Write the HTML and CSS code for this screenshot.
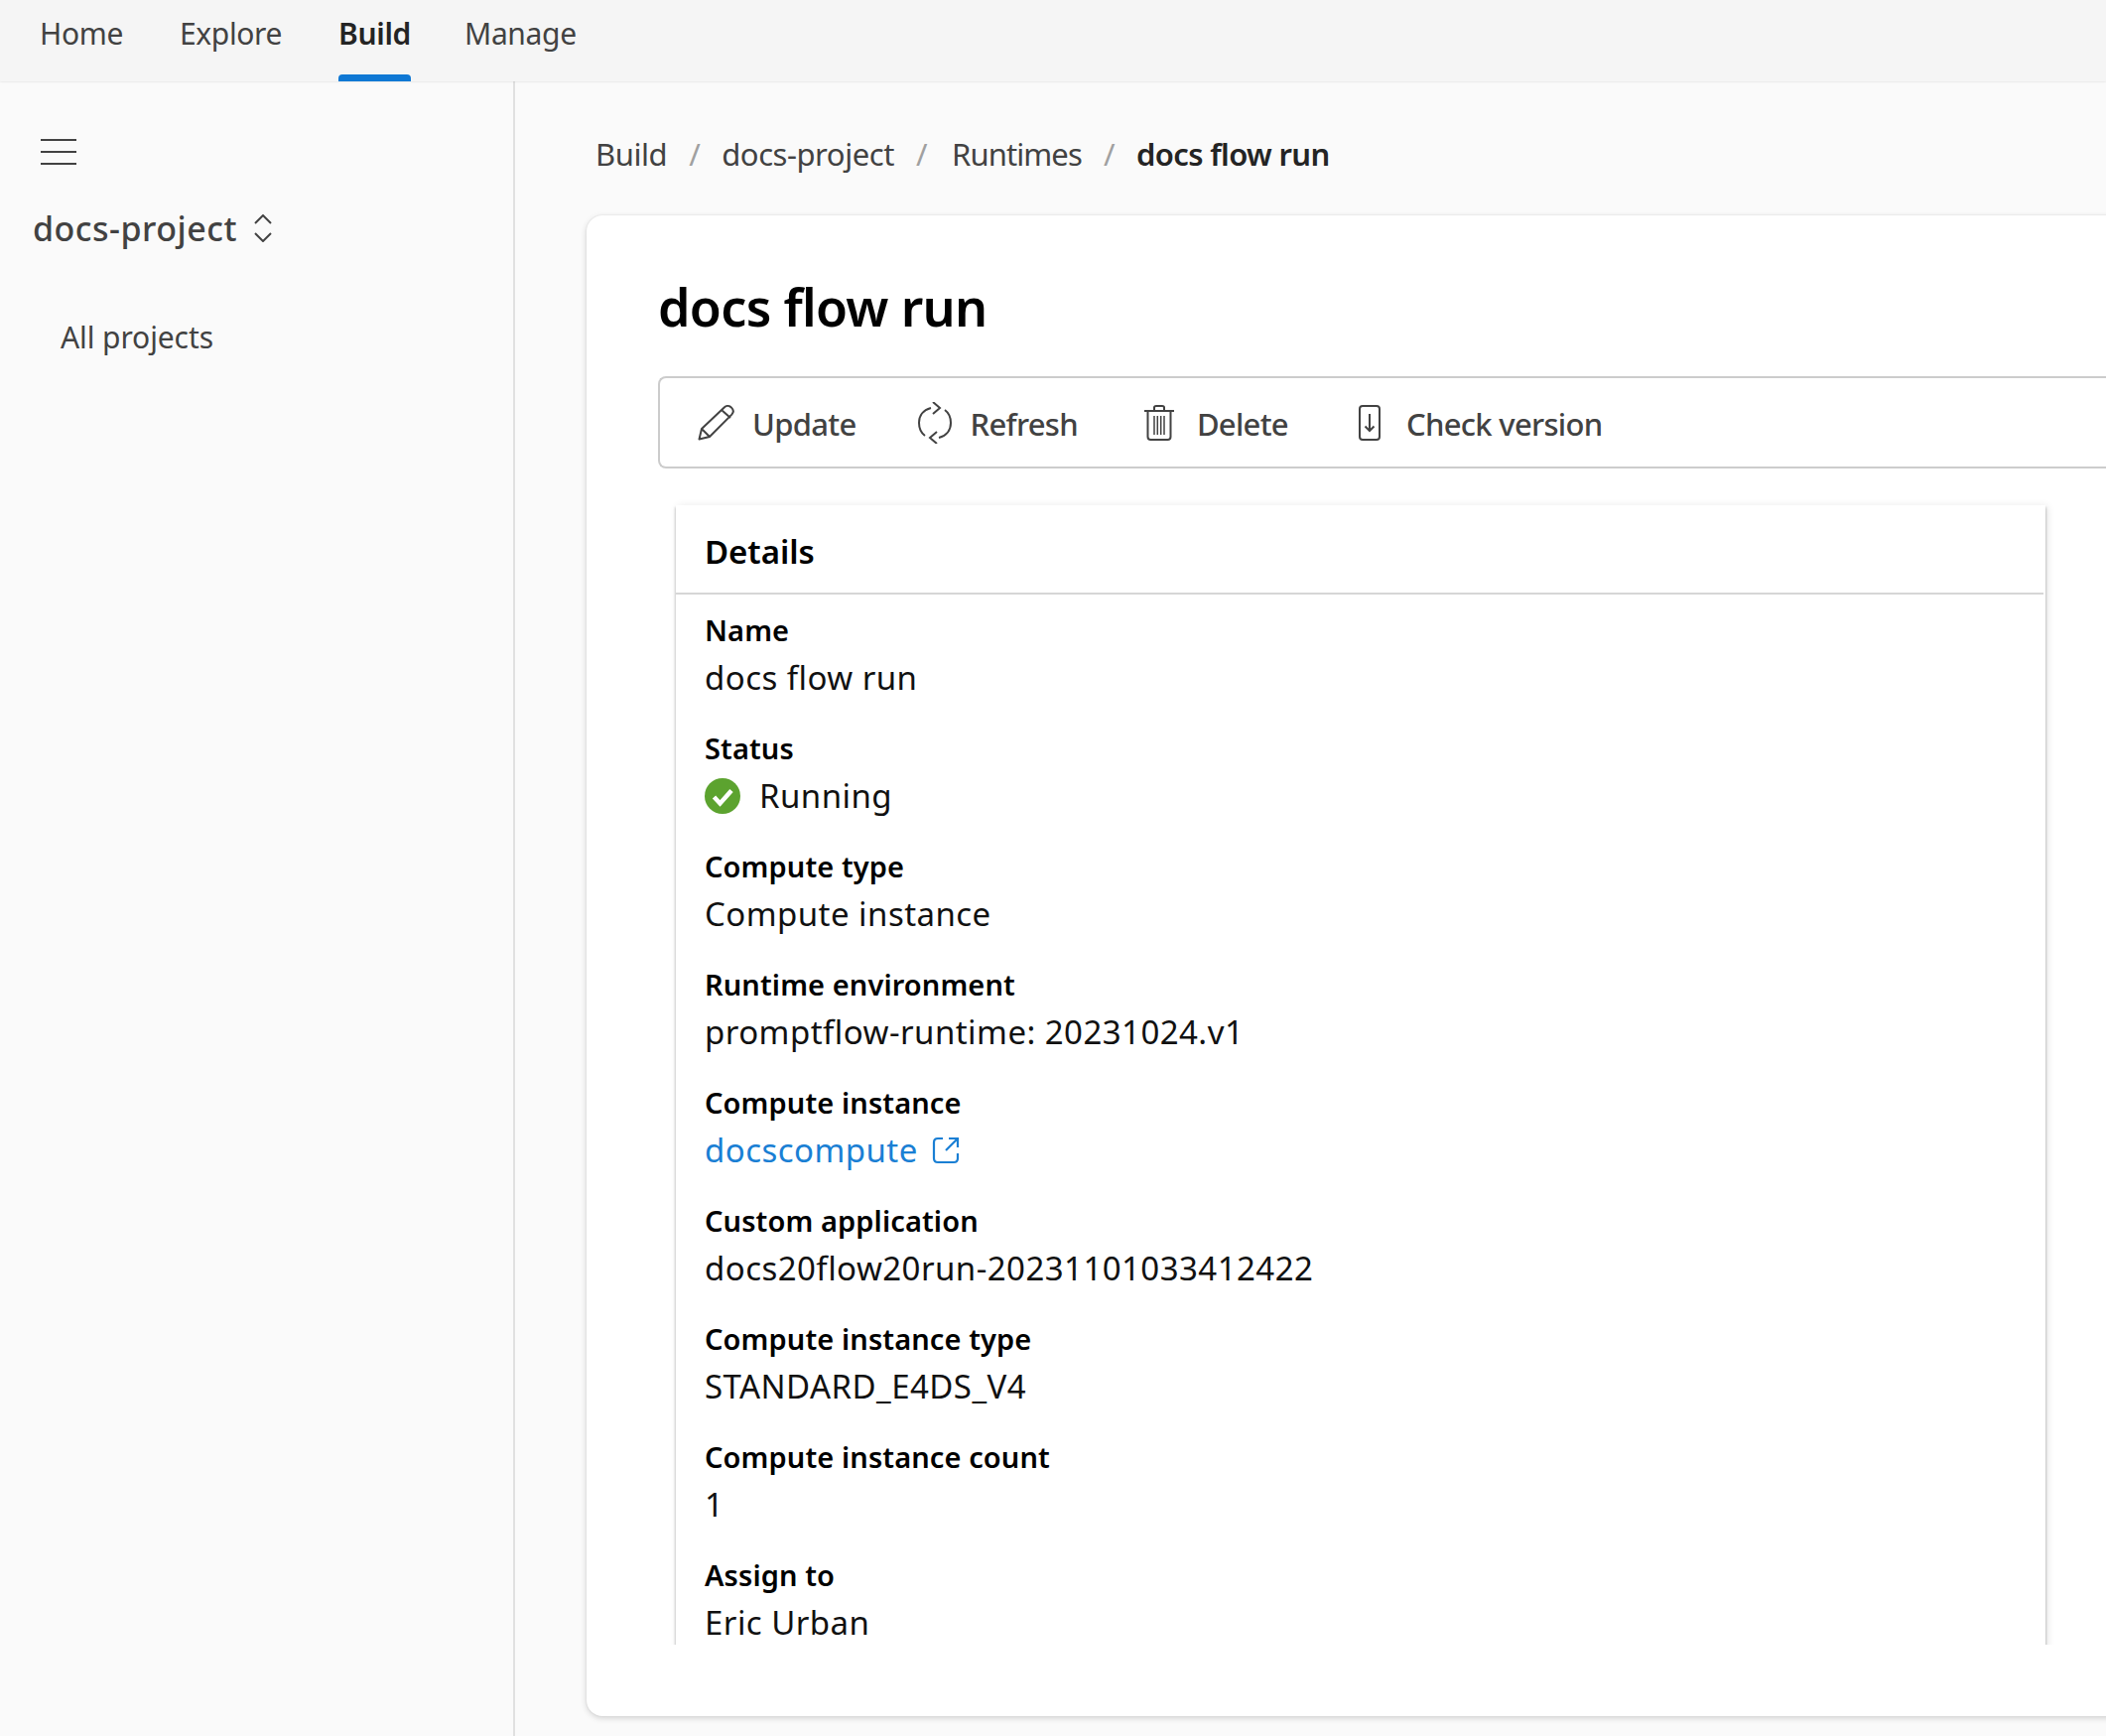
FILE: index.html
```html
<!DOCTYPE html>
<html lang="en">
<head>
<meta charset="utf-8">
<title>docs flow run</title>
<link rel="stylesheet" href="styles.css">
</head>
<body>
<header class="topbar">
  <nav class="tabs">
    <a class="tab tab-home">Home</a>
    <a class="tab tab-explore">Explore</a>
    <a class="tab tab-build">Build</a>
    <a class="tab tab-manage">Manage</a>
  </nav>
</header>
<div class="main">
  <aside class="sidebar">
    <svg class="hamburger" width="36" height="26" viewBox="0 0 36 26"><path d="M0 1h36M0 13h36M0 25h36" stroke="#424242" stroke-width="2" fill="none"/></svg>
    <div class="project">
      <span class="project-name">docs-project</span>
      <svg class="updown" width="20" height="28" viewBox="0 0 20 28"><path d="M2 9 10 1l8 8M2 19l8 8 8-8" stroke="#424242" stroke-width="2" fill="none"/></svg>
    </div>
    <a class="all-projects">All projects</a>
  </aside>
  <section class="content">
    <nav class="crumbs">
      <a class="crumb c1">Build</a><span class="sep s1">/</span>
      <a class="crumb c2">docs-project</a><span class="sep s2">/</span>
      <a class="crumb c3">Runtimes</a><span class="sep s3">/</span>
      <span class="crumb current">docs flow run</span>
    </nav>
    <div class="card">
      <h1 class="title">docs flow run</h1>
      <div class="toolbar">
        <button class="tool t-update">
          <svg width="38" height="36" viewBox="0 0 38 36"><path d="M1.5 34.5 4 24 27 2.2c2-1.800 5-1.600 7 .4 2.200 2.200 2.200 5 .3 7L12 32 1.500 34.500ZM4 24l8 8M24 5l9 8" stroke="#424242" stroke-width="2" fill="none" stroke-linejoin="round"/></svg>
          <span>Update</span>
        </button>
        <button class="tool t-refresh">
          <svg width="34" height="42" viewBox="0 0 34 42"><path d="M13 6C5 8 1 14 1 21c0 5 2 10 6 13M21 36c8-2 12-8 12-15 0-5-2-10-6-13" stroke="#424242" stroke-width="2" fill="none"/><path d="M15 0l7 6-7 6M19 42l-7-6 7-6" stroke="#424242" stroke-width="2" fill="none"/></svg>
          <span>Refresh</span>
        </button>
        <button class="tool t-delete">
          <svg width="30" height="36" viewBox="0 0 30 36"><path d="M0 6h30M10 6V2.500C10 1.500 11 1 12 1h6c1 0 2 .500 2 1.500V6M3.500 6v26c0 2 1 3 3 3h17c2 0 3-1 3-3V6" stroke="#424242" stroke-width="2" fill="none"/><path d="M10 11v19M13.300 11v19M16.700 11v19M20 11v19" stroke="#424242" stroke-width="1.500" fill="none"/></svg>
          <span>Delete</span>
        </button>
        <button class="tool t-check">
          <svg width="22" height="36" viewBox="0 0 22 36"><rect x="1" y="1" width="20" height="34" rx="3" stroke="#424242" stroke-width="2" fill="none"/><path d="M11 9v17M6.500 21.500 11 26l4.500-4.500" stroke="#424242" stroke-width="2" fill="none"/></svg>
          <span>Check version</span>
        </button>
      </div>
      <div class="details-clip">
        <div class="details">
          <h2 class="details-head">Details</h2>
          <div class="fields">
            <div class="field"><div class="label">Name</div><div class="value">docs flow run</div></div>
            <div class="field"><div class="label">Status</div><div class="value status">
              <svg width="36" height="36" viewBox="0 0 36 36"><circle cx="18" cy="18" r="18" fill="#5ca32f"/><path d="M9.500 19l6 6.500 11.500-13" stroke="#fff" stroke-width="4.500" fill="none"/></svg>
              <span>Running</span></div></div>
            <div class="field"><div class="label">Compute type</div><div class="value">Compute instance</div></div>
            <div class="field"><div class="label">Runtime environment</div><div class="value">promptflow-runtime: 20231024.v1</div></div>
            <div class="field"><div class="label">Compute instance</div><div class="value"><a class="link">docscompute
              <svg width="28" height="28" viewBox="0 0 28 28"><path d="M11 2H6C3.500 2 2 3.500 2 6v16c0 2.500 1.500 4 4 4h16c2.500 0 4-1.500 4-4v-5M17 2h9v9M26 2 14 14" stroke="#1a7fd4" stroke-width="2.200" fill="none"/></svg></a></div></div>
            <div class="field"><div class="label">Custom application</div><div class="value">docs20flow20run-20231101033412422</div></div>
            <div class="field"><div class="label">Compute instance type</div><div class="value">STANDARD_E4DS_V4</div></div>
            <div class="field"><div class="label">Compute instance count</div><div class="value">1</div></div>
            <div class="field"><div class="label">Assign to</div><div class="value">Eric Urban</div></div>
          </div>
        </div>
      </div>
    </div>
  </section>
</div>
</body>
</html>
```
FILE: styles.css
```css
* { box-sizing: border-box; }
html, body { margin: 0; height: 100%; overflow: hidden; }
body {
  font-family: "Noto Sans", "Open Sans", sans-serif;
  background: #fafafa;
  color: #242424;
  display: flex;
  flex-direction: column;
}
.topbar {
  height: 82px;
  flex: none;
  background: #f5f5f5;
  box-shadow: 0 0 2px rgba(0,0,0,.16);
  padding-left: 40px;
  position: relative;
  z-index: 2;
}
.tabs { display: flex; height: 100%; gap: 57px; }
.tab {
  font-size: 30px;
  letter-spacing: -.35px;
  color: #424242;
  line-height: 68px;
  height: 82px;
}
.tab-build {
  position: relative;
  font-weight: 600;
  color: #242424;
  margin-right: -3px;
}
.tab-build::after {
  content: "";
  position: absolute;
  left: 0;
  right: 0;
  bottom: 0;
  height: 7px;
  background: #0f78d4;
  border-radius: 4px 4px 0 0;
}
.main { flex: 1; display: flex; min-height: 0; }
.sidebar {
  width: 519px;
  flex: none;
  border-right: 2px solid #e0e0e0;
  padding: 58px 0 0 33px;
}
.hamburger { display: block; margin-left: 8px; }
.project { display: flex; align-items: center; gap: 16px; margin-top: 42px; height: 44px; }
.project-name { font-size: 34px; font-weight: 500; letter-spacing: .5px; color: #424242; line-height: 44px; }
.updown { flex: none; }
.all-projects { display: block; margin: 66px 0 0 28px; font-size: 30px; letter-spacing: -.1px; line-height: 44px; color: #424242; }
.content { flex: 1; min-width: 0; overflow: hidden; padding: 0 0 20px 72px; display: flex; flex-direction: column; }
.crumbs { height: 135px; flex: none; display: flex; align-items: center; padding: 10px 0 0 9px; font-size: 31px; letter-spacing: -.45px; color: #424242; }
.sep { color: #a0a0a0; margin: 0 22px; }
.c3 { margin-left: 3px; letter-spacing: -.9px; }
.current { font-weight: 600; color: #242424; letter-spacing: -.65px; }
.card {
  flex: 1;
  min-height: 0;
  width: 1700px;
  background: #fff;
  border-radius: 16px;
  box-shadow: 0 2px 6px rgba(0,0,0,.16), 0 0 2px rgba(0,0,0,.1);
  padding: 0 0 0 72px;
  display: flex;
  flex-direction: column;
}
.title { margin: 0; height: 162px; flex: none; font-size: 52px; font-weight: 600; letter-spacing: -.7px; color: #000; line-height: 184px; }
.toolbar {
  height: 93px;
  flex: none;
  border: 2px solid #ccc;
  border-right: 0;
  border-radius: 8px 0 0 8px;
  display: flex;
  align-items: center;
  padding-left: 38px;
}
.tool {
  display: flex;
  align-items: center;
  background: none;
  border: 0;
  padding: 0;
  font: inherit;
  font-size: 31px;
  font-weight: 500;
  letter-spacing: -.7px;
  color: #424242;
}
.tool span { position: relative; top: 1px; }
.tool svg { flex: none; }
.t-update { gap: 17px; margin-right: 62px; }
.t-refresh { gap: 19px; margin-right: 67px; }
.t-delete { gap: 23px; margin-right: 71px; }
.t-check { gap: 26px; }
.details-clip {
  flex: 1;
  min-height: 0;
  margin: 31px 0 72px 0;
  overflow: hidden;
  padding: 6px 40px 0 18px;
  width: 1438px;
}
.details {
  background: #fff;
  width: 1380px;
  min-height: 100%;
  box-shadow: -1px 2px 2px rgba(0,0,0,.16), 1px 2px 2px rgba(0,0,0,.16), 2px 1px 8px rgba(0,0,0,.1);
}
.details-head {
  margin: 0 2px 0 0;
  height: 90px;
  padding-left: 29px;
  border-bottom: 2px solid #d6d6d6;
  font-size: 33px;
  font-weight: 600;
  letter-spacing: -.05px;
  line-height: 93px;
  color: #000;
}
.fields { padding: 12px 0 0 29px; }
.field { height: 119px; }
.label { font-size: 29px; font-weight: 600; letter-spacing: .1px; line-height: 47px; color: #000; }
.value { font-size: 33px; letter-spacing: .45px; line-height: 48px; color: #111; padding-top: 1px; }
.status { display: flex; align-items: center; gap: 19px; }
.link { color: #1a7fd4; display: inline-flex; align-items: center; gap: 14px; }
```
